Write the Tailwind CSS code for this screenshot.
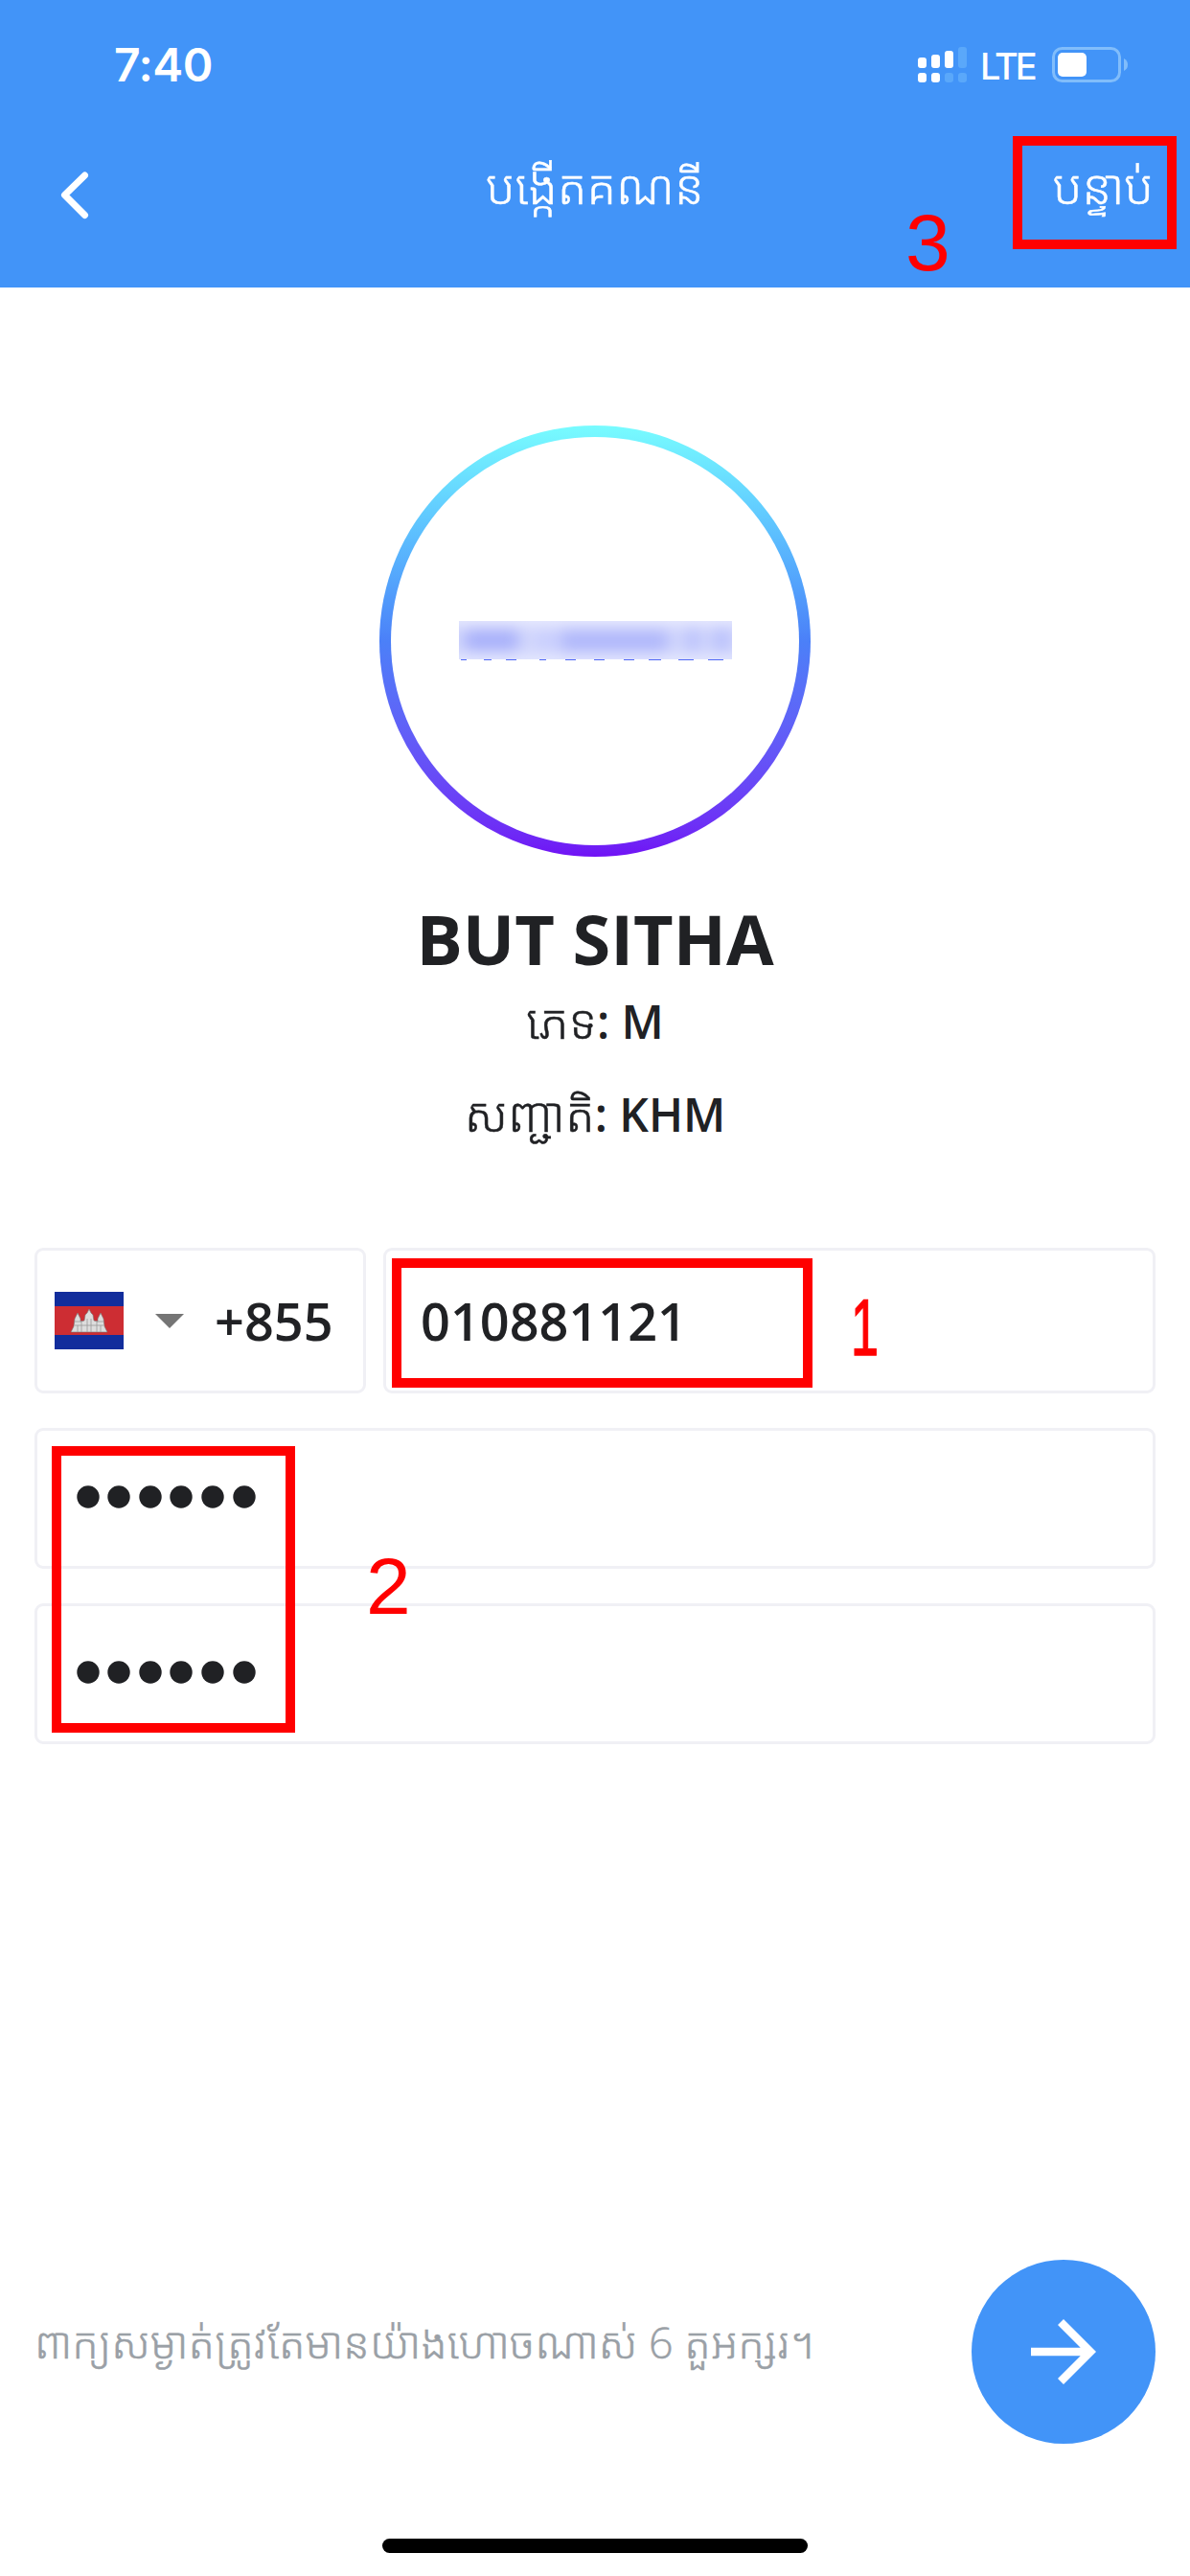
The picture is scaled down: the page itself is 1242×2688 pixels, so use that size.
<!DOCTYPE html>
<html lang="km">
<head>
<meta charset="utf-8">
<title>បង្កើតគណនី</title>
<script src="https://cdn.jsdelivr.net/npm/@tailwindcss/browser@4"></script>
</head>
<body class="bg-white">
<div class="relative flex h-[2688px] w-[1242px] flex-col overflow-hidden bg-white font-['Open_Sans','Noto_Sans_Khmer',sans-serif] text-[#202124]">
  <header class="flex h-[300px] shrink-0 flex-col bg-[#4294f8] text-white">
    <div class="flex h-[136px] items-center justify-between pr-[65px] pl-[119px]">
      <span class="font-['Inter'] text-[48px] font-semibold tracking-[-0.5px]">7:40</span>
      <div class="flex items-center pb-[2px]">
        <svg class="h-[37px] w-[51px]" viewBox="0 0 51 37" fill="#fff">
          <rect x="0" y="11" width="9" height="11" rx="3"/><rect x="14" y="8" width="9" height="14" rx="3"/><rect x="28" y="4" width="9" height="18" rx="3"/><rect x="42" y="0" width="9" height="22" rx="3" fill="#5aa8fa"/>
          <rect x="0" y="27" width="9" height="10" rx="3"/><rect x="14" y="27" width="9" height="10" rx="3"/><rect x="28" y="27" width="9" height="10" rx="3" fill="#5aa8fa"/><rect x="42" y="27" width="9" height="10" rx="3" fill="#5aa8fa"/>
        </svg>
        <span class="mt-[4px] ml-[14px] w-[75px] font-['Inter'] text-[38px] font-medium tracking-[-3px]">LTE</span>
        <svg class="h-[37px] w-[79px]" viewBox="0 0 79 37" fill="none">
          <rect x="1.5" y="1.5" width="69" height="34" rx="9" stroke="#81bdfb" stroke-width="3"/><rect x="6" y="6" width="30" height="25" rx="5" fill="#fff"/><path d="M75 12q4 2 4 6.500t-4 6.500z" fill="#81bdfb"/>
        </svg>
      </div>
    </div>
    <div class="grid h-[136px] grid-cols-[200px_1fr_200px] items-center">
      <svg class="ml-[63px] h-[50px] w-[30px]" viewBox="0 0 30 50" fill="none" stroke="#fff" stroke-width="7" stroke-linecap="round" stroke-linejoin="round"><path d="M25.500 4 4.500 24.500l21 21"/></svg>
      <h1 class="pb-[20px] text-center text-[50px] leading-[72px] font-light whitespace-nowrap [-webkit-text-stroke:0.5px_currentColor]">បង្កើតគណនី</h1>
      <span class="pr-[38px] pb-[20px] text-right text-[50px] leading-[72px] font-light whitespace-nowrap [-webkit-text-stroke:0.5px_currentColor]">បន្ទាប់</span>
    </div>
  </header>

  <section class="mt-[144px] flex flex-col items-center">
    <div class="flex size-[450px] items-center justify-center rounded-full bg-linear-to-b from-[#78fcff] via-[#4b80f8] to-[#7010f5] p-[12px]">
      <div class="flex size-full items-center justify-center rounded-full bg-white">
        <svg class="h-[42px] w-[285px]" viewBox="0 0 285 42">
          <defs><filter id="soft" x="-30%" y="-50%" width="160%" height="200%"><feGaussianBlur stdDeviation="8"/></filter><clipPath id="strip"><rect width="285" height="40"/></clipPath></defs>
          <rect width="285" height="40" fill="#d2d7fc"/>
          <g clip-path="url(#strip)"><g filter="url(#soft)">
            <rect x="-10" y="-12" width="305" height="14" fill="#f1f2ff"/><rect x="-10" y="38" width="305" height="12" fill="#eef0ff"/>
            <rect x="6" y="8" width="56" height="24" fill="#a9b1fa"/><rect x="84" y="12" width="14" height="18" fill="#c5caff"/><rect x="106" y="9" width="112" height="24" fill="#b0b8fb"/><rect x="236" y="6" width="16" height="28" fill="#bcc3fc"/><rect x="266" y="6" width="16" height="28" fill="#b8bffc"/>
          </g></g>
          <path d="M2 40.500h6m18 0h8m15 0h11m24 0h7m20 0h11m19 0h11m20 0h11m15 0h13m18 0h16m15 0h16" stroke="#5068f5" stroke-width="1.200"/>
        </svg>
      </div>
    </div>
    <h2 class="mt-[36px] text-[72px] leading-[98px] font-bold">BUT SITHA</h2>
    <p class="mt-[1px] text-[48px] leading-[72px] font-semibold whitespace-nowrap"><span class="text-[50px] font-light [-webkit-text-stroke:0.5px_currentColor]">ភេទ</span>: M</p>
    <p class="mt-[24px] text-[48px] leading-[72px] font-semibold whitespace-nowrap"><span class="text-[50px] font-light [-webkit-text-stroke:0.5px_currentColor]">សញ្ជាតិ</span>: KHM</p>
  </section>

  <form class="absolute top-[1302px] left-[36px] flex w-[1170px] flex-col gap-[36px]">
    <div class="flex h-[152px] gap-[18px]">
      <div class="flex w-[346px] items-center rounded-[9px] border-3 border-[#f0f0f5] pl-[18px]">
        <svg class="h-[60px] w-[72px]" viewBox="0 0 72 60">
          <path fill="#122d9c" d="M0 0h72v60H0z"/><path fill="#cd2d33" d="M0 15h72v30H0z"/>
          <path fill="#ddd" stroke="#777" stroke-width=".6" d="M17 42l3-6 1-8 3-6 3 6v3l4-1 1-6 2-2 2-4 2 4 2 2 1 6 4 1v-3l3-6 3 6 1 8 3 6z"/>
          <path stroke="#999" stroke-width=".8" d="M21 31h7M21 35h30M44 31h7M28 30v12M34 28v14M38 28v14M44 30v12M24 35v7M48 35v7"/>
        </svg>
        <svg class="ml-[33px] h-[15px] w-[30px]" viewBox="0 0 30 15"><path fill="#757575" d="M0 0h30L15 15z"/></svg>
        <span class="ml-[32px] text-[54px] leading-[72px] font-semibold">+855</span>
      </div>
      <div class="flex flex-1 items-center rounded-[9px] border-3 border-[#f0f0f5] pl-[36px] text-[54px] font-semibold">010881121</div>
    </div>
    <div class="flex h-[147px] items-center rounded-[9px] border-3 border-[#f0f0f5] pb-[3px] pl-[41px]">
      <svg class="h-6 w-[187px]" viewBox="0 0 187 24" fill="#202124"><circle cx="12" cy="12" r="11.700"/><circle cx="44" cy="12" r="11.700"/><circle cx="77" cy="12" r="11.700"/><circle cx="109" cy="12" r="11.700"/><circle cx="142" cy="12" r="11.700"/><circle cx="175" cy="12" r="11.700"/></svg>
    </div>
    <div class="flex h-[147px] items-center rounded-[9px] border-3 border-[#f0f0f5] pb-[3px] pl-[41px]">
      <svg class="h-6 w-[187px]" viewBox="0 0 187 24" fill="#202124"><circle cx="12" cy="12" r="11.700"/><circle cx="44" cy="12" r="11.700"/><circle cx="77" cy="12" r="11.700"/><circle cx="109" cy="12" r="11.700"/><circle cx="142" cy="12" r="11.700"/><circle cx="175" cy="12" r="11.700"/></svg>
    </div>
  </form>

  <footer class="mt-auto flex h-[330px] shrink-0 flex-col items-center">
    <div class="flex w-[1170px] items-center justify-between">
      <p class="pb-[21px] text-[44.8px] leading-[72px] font-light whitespace-nowrap text-[#9aa0a6] [-webkit-text-stroke:0.5px_currentColor]">ពាក្យសម្ងាត់ត្រូវតែមានយ៉ាងហោចណាស់ 6 តួអក្សរ។</p>
      <button class="flex size-[192px] items-center justify-center rounded-full bg-[#4294f8]"><svg class="size-[102px]" viewBox="0 0 24 24" fill="#fff"><path d="M12 4l-1.410 1.410L16.170 11H4v2h12.170l-5.580 5.590L12 20l8-8z"/></svg></button>
    </div>
    <div class="mt-[99px] h-[15px] w-[444px] rounded-full bg-black"></div>
  </footer>

  <div class="absolute top-[142px] left-[1057px] h-[118px] w-[171px] border-10 border-[#f00]"></div>
  <div class="absolute top-[1313px] left-[409px] h-[135px] w-[439px] border-10 border-[#f00]"></div>
  <div class="absolute top-[1509px] left-[54px] h-[299px] w-[254px] border-10 border-[#f00]"></div>
  <span class="absolute top-[206px] left-[945px] font-['Liberation_Sans'] text-[84px] leading-[94px] text-[#f00]">3</span>
  <span class="absolute top-[1338px] left-[879px] scale-x-62 font-['Liberation_Sans'] text-[84px] leading-[94px] text-[#f00] [-webkit-text-stroke:1.5px_#f00]">1</span>
  <span class="absolute top-[1608px] left-[382px] font-['Liberation_Sans'] text-[84px] leading-[94px] text-[#f00]">2</span>
</div>
</body>
</html>
